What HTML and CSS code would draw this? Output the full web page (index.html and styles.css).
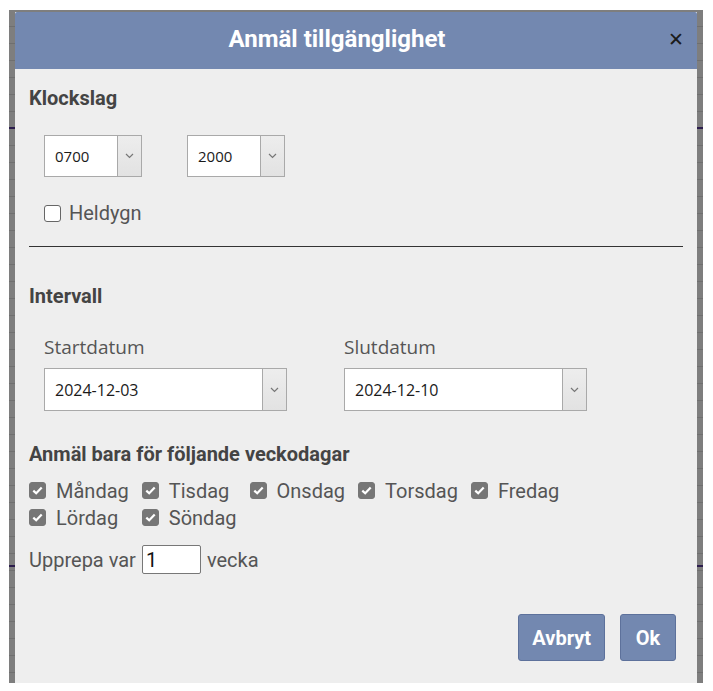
FILE: index.html
```html
<!DOCTYPE html>
<html>
<head>
    <title>Anmäl tillgänglighet</title>
    <link rel="stylesheet" href="styles.css">
</head>
<body>
<div class="backdrop">
    <div class="dialog">
        <div class="dialog-head">
            <span class="dialog-title">Anmäl tillgänglighet</span>
            <span class="close">&#x2715;</span>
        </div>
        <div class="dialog-body">
            <h3 class="section-title first">Klockslag</h3>
            <div class="time-row">
                <div class="select small"><span class="val">0700</span><span class="arrow"><svg width="9" height="6" viewBox="0 0 9 6"><path d="M1 1 L4.5 4.5 L8 1" fill="none" stroke="#777" stroke-width="1.2"/></svg></span></div>
                <div class="select small"><span class="val">2000</span><span class="arrow"><svg width="9" height="6" viewBox="0 0 9 6"><path d="M1 1 L4.5 4.5 L8 1" fill="none" stroke="#777" stroke-width="1.2"/></svg></span></div>
            </div>
            <label class="heldygn"><span class="box"></span>Heldygn</label>
            <hr class="divider">

            <h3 class="section-title interval">Intervall</h3>
            <div class="date-row">
                <div class="date-field">
                    <div class="field-label">Startdatum</div>
                    <div class="select wide"><span class="val">2024-12-03</span><span class="arrow"><svg width="9" height="6" viewBox="0 0 9 6"><path d="M1 1 L4.5 4.5 L8 1" fill="none" stroke="#777" stroke-width="1.2"/></svg></span></div>
                </div>
                <div class="date-field">
                    <div class="field-label">Slutdatum</div>
                    <div class="select wide"><span class="val">2024-12-10</span><span class="arrow"><svg width="9" height="6" viewBox="0 0 9 6"><path d="M1 1 L4.5 4.5 L8 1" fill="none" stroke="#777" stroke-width="1.2"/></svg></span></div>
                </div>
            </div>

            <h3 class="section-title days-title">Anmäl bara för följande veckodagar</h3>
            <div class="days">
                <label class="day"><span class="box checked"><svg width="11" height="9" viewBox="0 0 11 9"><path d="M1.3 4.6 L4.2 7.3 L9.7 1.5" fill="none" stroke="#fff" stroke-width="2.2"/></svg></span>Måndag</label>
                <label class="day"><span class="box checked"><svg width="11" height="9" viewBox="0 0 11 9"><path d="M1.3 4.6 L4.2 7.3 L9.7 1.5" fill="none" stroke="#fff" stroke-width="2.2"/></svg></span>Tisdag</label>
                <label class="day"><span class="box checked"><svg width="11" height="9" viewBox="0 0 11 9"><path d="M1.3 4.6 L4.2 7.3 L9.7 1.5" fill="none" stroke="#fff" stroke-width="2.2"/></svg></span>Onsdag</label>
                <label class="day"><span class="box checked"><svg width="11" height="9" viewBox="0 0 11 9"><path d="M1.3 4.6 L4.2 7.3 L9.7 1.5" fill="none" stroke="#fff" stroke-width="2.2"/></svg></span>Torsdag</label>
                <label class="day"><span class="box checked"><svg width="11" height="9" viewBox="0 0 11 9"><path d="M1.3 4.6 L4.2 7.3 L9.7 1.5" fill="none" stroke="#fff" stroke-width="2.2"/></svg></span>Fredag</label>
                <label class="day"><span class="box checked"><svg width="11" height="9" viewBox="0 0 11 9"><path d="M1.3 4.6 L4.2 7.3 L9.7 1.5" fill="none" stroke="#fff" stroke-width="2.2"/></svg></span>Lördag</label>
                <label class="day"><span class="box checked"><svg width="11" height="9" viewBox="0 0 11 9"><path d="M1.3 4.6 L4.2 7.3 L9.7 1.5" fill="none" stroke="#fff" stroke-width="2.2"/></svg></span>Söndag</label>
            </div>

            <div class="repeat-row">
                <span>Upprepa var</span>
                <input class="repeat-input" type="text" value="1">
                <span>vecka</span>
            </div>

            <div class="actions">
                <button class="btn">Avbryt</button>
                <button class="btn">Ok</button>
            </div>
        </div>
    </div>
</div>
</body>
</html>
```

FILE: styles.css
```css
body {
    margin: 0;
    background: #ffffff;
    font-family: Roboto, "Liberation Sans", sans-serif;
}
.backdrop {
    margin: 10px 0 0 9px;
    width: 694px;
    height: 673px;
    padding: 2px 6px 0 6px;
    box-sizing: border-box;
    background:
        linear-gradient(#2c1d4d, #2c1d4d) 0 117px / 100% 2px no-repeat,
        linear-gradient(#2c1d4d, #2c1d4d) 0 555px / 100% 2px no-repeat,
        repeating-linear-gradient(to bottom, #7e7e7e 0, #7e7e7e 16px, #6f6f6f 16px, #6f6f6f 17px);
}
.dialog {
    background: #eeeeee;
    height: 671px;
    display: flex;
    flex-direction: column;
}
.dialog-head {
    height: 57px;
    background: #7388b0;
    border-radius: 2px 2px 0 0;
    display: flex;
    align-items: center;
    justify-content: center;
    position: relative;
}
.dialog-title {
    color: #ffffff;
    font-weight: bold;
    font-size: 24px;
    margin-right: 38px;
    margin-top: -3px;
}
.close {
    position: absolute;
    right: 13px;
    top: 16px;
    font-size: 19px;
    color: #1b1b1b;
    font-family: "DejaVu Sans", sans-serif;
}
.dialog-body {
    padding: 0 14px;
}
.section-title {
    margin: 0;
    font-size: 20px;
    line-height: 22px;
    font-weight: bold;
    color: #444444;
}
.section-title.first {
    margin-top: 18px;
}
.time-row {
    display: flex;
    gap: 45px;
    margin: 26px 0 0 15px;
}
.select {
    display: flex;
    background: #ffffff;
    border: 1px solid #a9a9a9;
    box-sizing: border-box;
    font-family: "Open Sans", "Noto Sans", sans-serif;
    color: #1a1a1a;
}
.select.small {
    width: 98px;
    height: 42px;
}
.select.wide {
    width: 243px;
    height: 43px;
}
.select .val {
    flex: 1;
    display: flex;
    align-items: center;
    padding-left: 10px;
    font-size: 15px;
}
.select.wide .val {
    font-size: 16px;
}
.select .arrow {
    width: 23px;
    border-left: 1px solid #a9a9a9;
    background: linear-gradient(#ededed, #e2e2e2);
    display: flex;
    align-items: center;
    justify-content: center;
}
.heldygn {
    display: flex;
    align-items: center;
    margin: 25px 0 0 15px;
    height: 22px;
    font-size: 20px;
    color: #555555;
}
.box {
    width: 17px;
    height: 17px;
    box-sizing: border-box;
    border: 1px solid #666666;
    border-radius: 3px;
    background: #ffffff;
    margin-right: 8px;
    display: inline-flex;
    align-items: center;
    justify-content: center;
}
.box.checked {
    background: #767676;
    border-color: #767676;
    margin-right: 10px;
}
.divider {
    margin: 22px 0 0 0;
    border: none;
    border-top: 1px solid #333333;
}
.section-title.interval {
    margin-top: 38px;
}
.date-row {
    display: flex;
    gap: 57px;
    margin: 29px 0 0 15px;
}
.field-label {
    font-family: "Open Sans", "Noto Sans", sans-serif;
    font-size: 19px;
    line-height: 22px;
    color: #555555;
    margin-bottom: 10px;
}
.section-title.days-title {
    margin-top: 32px;
}
.days {
    display: grid;
    grid-template-columns: repeat(5, max-content);
    column-gap: 13px;
    margin-top: 12px;
}
.day {
    display: flex;
    align-items: center;
    height: 27px;
    font-size: 20px;
    color: #555555;
}
.repeat-row {
    display: flex;
    align-items: center;
    gap: 6px;
    margin-top: 14px;
    font-size: 20px;
    color: #555555;
}
.repeat-input {
    width: 59px;
    height: 29px;
    box-sizing: border-box;
    border: 1px solid #777777;
    border-radius: 2px;
    padding: 0 3px;
    font-family: Roboto, sans-serif;
    font-size: 20px;
    color: #111111;
    background: #ffffff;
}
.actions {
    display: flex;
    justify-content: flex-end;
    gap: 15px;
    margin: 40px 7px 0 0;
}
.btn {
    height: 47px;
    padding: 0 13px;
    min-width: 56px;
    background: #7388b0;
    border: 1px solid #5d719b;
    border-radius: 3px;
    color: #ffffff;
    font-family: Roboto, sans-serif;
    font-weight: bold;
    font-size: 20px;
}
```
